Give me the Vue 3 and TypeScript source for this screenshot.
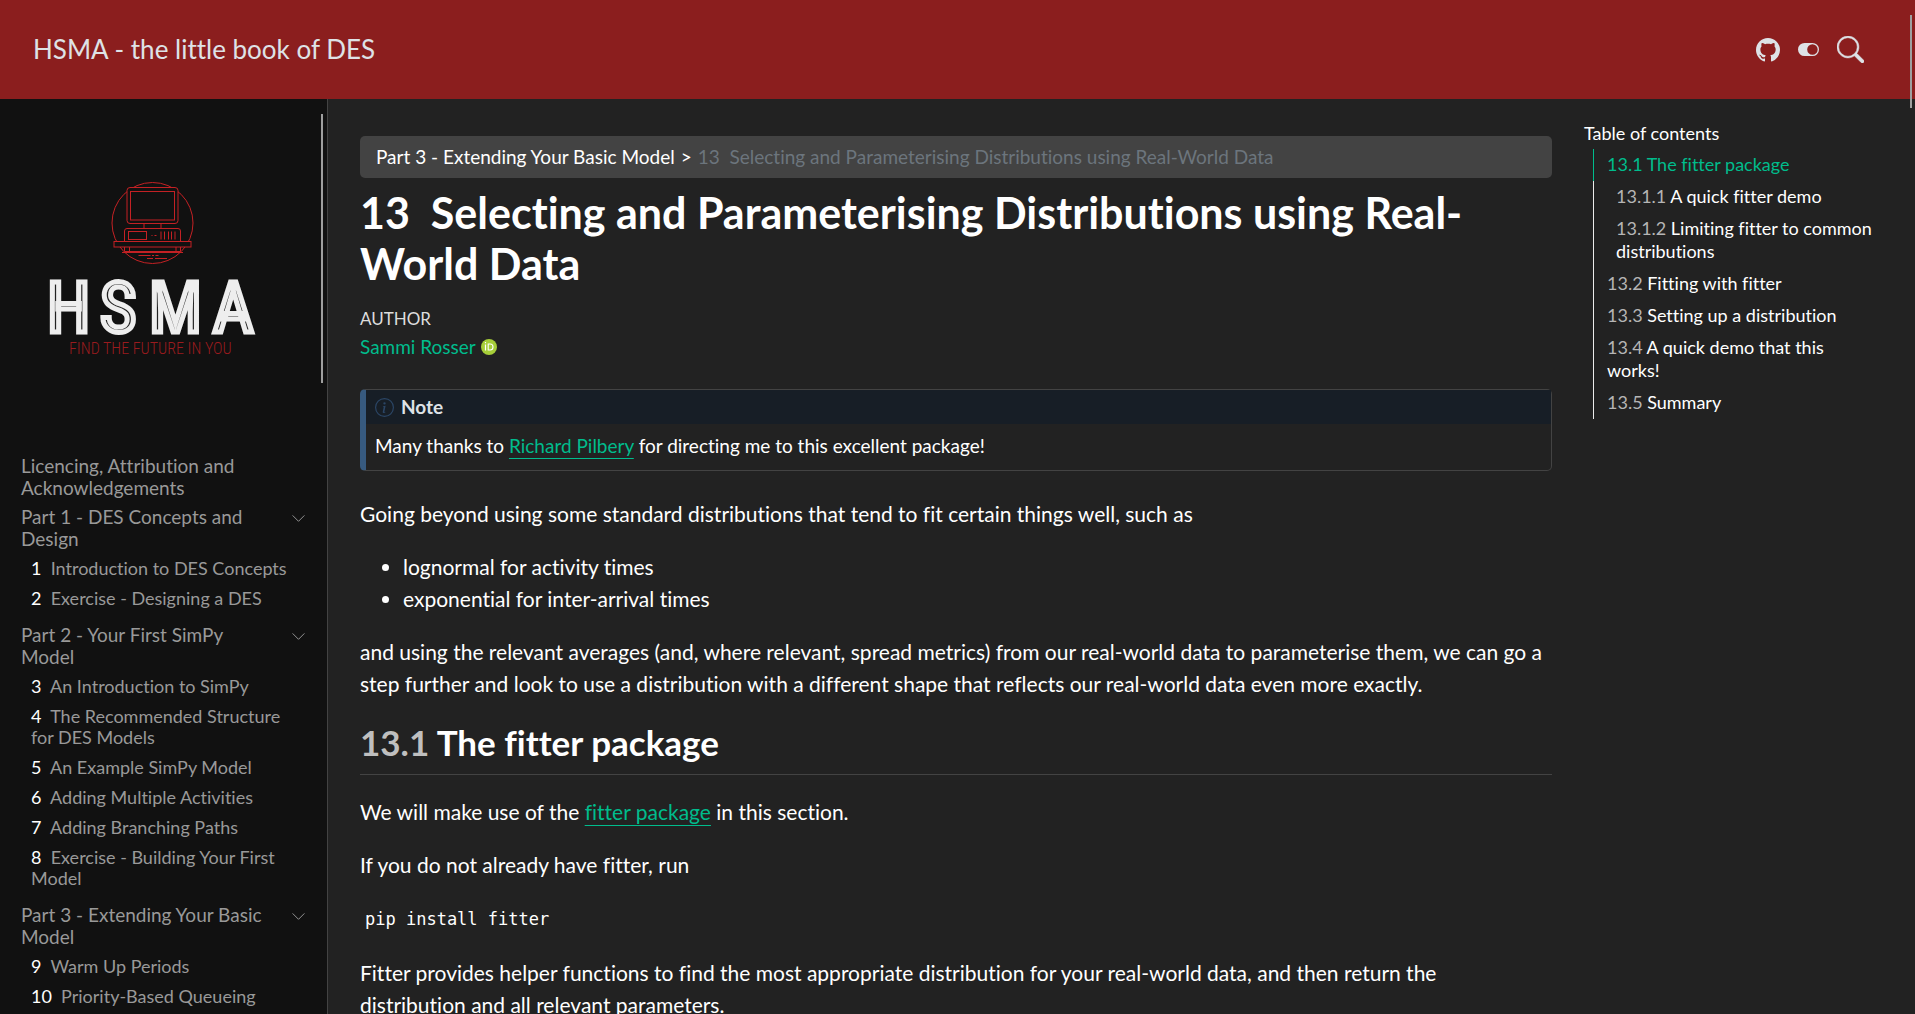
<script setup lang="ts">
interface Chapter {
  num: number
  title: string
}
interface Part {
  title: string
  chapters: Chapter[]
}
interface TocEntry {
  num: string
  title: string
  nested?: boolean
  active?: boolean
}

const parts: Part[] = [
  {
    title: 'Part 1 - DES Concepts and Design',
    chapters: [
      { num: 1, title: 'Introduction to DES Concepts' },
      { num: 2, title: 'Exercise - Designing a DES' },
    ],
  },
  {
    title: 'Part 2 - Your First SimPy Model',
    chapters: [
      { num: 3, title: 'An Introduction to SimPy' },
      { num: 4, title: 'The Recommended Structure for DES Models' },
      { num: 5, title: 'An Example SimPy Model' },
      { num: 6, title: 'Adding Multiple Activities' },
      { num: 7, title: 'Adding Branching Paths' },
      { num: 8, title: 'Exercise - Building Your First Model' },
    ],
  },
  {
    title: 'Part 3 - Extending Your Basic Model',
    chapters: [
      { num: 9, title: 'Warm Up Periods' },
      { num: 10, title: 'Priority-Based Queueing' },
    ],
  },
]

const toc: TocEntry[] = [
  { num: '13.1', title: 'The fitter package', active: true },
  { num: '13.1.1', title: 'A quick fitter demo', nested: true },
  { num: '13.1.2', title: 'Limiting fitter to common distributions', nested: true },
  { num: '13.2', title: 'Fitting with fitter' },
  { num: '13.3', title: 'Setting up a distribution' },
  { num: '13.4', title: 'A quick demo that this works!' },
  { num: '13.5', title: 'Summary' },
]
</script>

<template>
  <div class="page">
    <header class="navbar">
      <a class="brand" href="#">HSMA - the little book of DES</a>
      <div class="tools">
        <a href="#" class="tool" aria-label="GitHub">
          <svg width="24" height="24" viewBox="0 0 16 16" fill="currentColor">
            <path d="M8 0C3.58 0 0 3.58 0 8c0 3.54 2.29 6.53 5.47 7.59.4.07.55-.17.55-.38 0-.19-.01-.82-.01-1.49-2.01.37-2.53-.49-2.69-.94-.09-.23-.48-.94-.82-1.13-.28-.15-.68-.52-.01-.53.63-.01 1.08.58 1.23.82.72 1.21 1.87.87 2.33.66.07-.52.28-.87.51-1.07-1.78-.2-3.64-.89-3.64-3.95 0-.87.31-1.59.82-2.15-.08-.2-.36-1.02.08-2.12 0 0 .67-.21 2.2.82.64-.18 1.32-.27 2-.27s1.36.09 2 .27c1.53-1.04 2.2-.82 2.2-.82.44 1.1.16 1.92.08 2.12.51.56.82 1.27.82 2.15 0 3.07-1.87 3.75-3.65 3.95.29.25.54.73.54 1.48 0 1.07-.01 1.93-.01 2.2 0 .21.15.46.55.38A8.01 8.01 0 0 0 16 8c0-4.42-3.58-8-8-8" />
          </svg>
        </a>
        <button type="button" class="tool" aria-label="Toggle dark mode">
          <svg width="21" height="21" viewBox="0 0 16 16" fill="currentColor">
            <path d="M5 3a5 5 0 0 0 0 10h6a5 5 0 0 0 0-10zm6 9a4 4 0 1 1 0-8 4 4 0 0 1 0 8" />
          </svg>
        </button>
        <button type="button" class="tool" aria-label="Search">
          <svg width="27" height="27" viewBox="0 0 16 16" fill="currentColor" stroke="currentColor" stroke-width="0.3">
            <path d="M11.742 10.344a6.5 6.5 0 1 0-1.397 1.398h-.001c.03.04.062.078.098.115l3.85 3.85a1 1 0 0 0 1.415-1.414l-3.85-3.85a1.007 1.007 0 0 0-.115-.1zM12 6.5a5.5 5.5 0 1 1-11 0 5.5 5.5 0 0 1 11 0" />
          </svg>
        </button>
      </div>
    </header>

    <div class="columns">
      <nav class="sidebar" aria-label="Chapters">
        <a class="logo" href="#" aria-label="HSMA - find the future in you">
          <svg width="264" height="264" viewBox="0 0 264 264">
            <g fill="none" stroke="#c42124" stroke-width="1" transform="translate(0 -2)">
              <circle cx="131.500" cy="88" r="40.500" />
              <rect x="106" y="52.500" width="51" height="36" rx="3" fill="#111" />
              <rect x="109.500" y="56.500" width="44" height="28.500" />
              <path d="M123 88.500v5M140 88.500v5" />
              <path d="M103.500 106.500V96q0-2.500 2.500-2.500h51q2.500 0 2.500 2.500v10.500z" fill="#111" />
              <rect x="107.500" y="96.500" width="18" height="8" />
              <path d="M130.500 100.500h1M133.500 100.500h2M140 96.500v8M143.500 96.500v8M147.500 96.500v8M150.500 96.500v8M154 96.500v8" />
              <rect x="93" y="106.500" width="77" height="5.500" fill="#111" />
              <path d="M103.500 112v4.500h56V112M108.500 112v4.500M155 112v4.500M101 117.500h61" />
              <path d="M117.500 120.500h12M131 120.500h2M134.500 120.500h3M126 123.500h6M134 123.500h12" />
            </g>
            <text class="wordmark" y="195">
              <tspan x="26">H</tspan><tspan x="79">S</tspan><tspan x="128">M</tspan><tspan x="192">A</tspan>
            </text>
            <text class="tagline" x="48" y="217">FIND THE FUTURE IN YOU</text>
          </svg>
        </a>

        <ul class="menu">
          <li><a class="part-link" href="#">Licencing, Attribution and Acknowledgements</a></li>
          <li v-for="part in parts" :key="part.title" class="part">
            <div class="part-head">
              <a class="part-link" href="#">{{ part.title }}</a>
              <button type="button" class="toggle" aria-label="Toggle section">
                <svg width="15" height="15" viewBox="0 0 16 16" fill="none" stroke="currentColor" stroke-linecap="round" stroke-linejoin="round">
                  <path d="M2 5l6 6 6-6" />
                </svg>
              </button>
            </div>
            <ul class="chapters">
              <li v-for="chapter in part.chapters" :key="chapter.num">
                <a class="chapter" href="#"><span class="num">{{ chapter.num }}</span>&nbsp; {{ chapter.title }}</a>
              </li>
            </ul>
          </li>
        </ul>
        <div class="side-thumb"></div>
      </nav>

      <main class="content">
        <nav class="breadcrumb" aria-label="Breadcrumb">
          <a href="#">Part 3 - Extending Your Basic Model</a>
          <span class="sep">&gt;</span>
          <a class="current" href="#">13&nbsp; Selecting and Parameterising Distributions using Real-World Data</a>
        </nav>

        <h1>13&nbsp; Selecting and Parameterising Distributions using Real-World Data</h1>

        <div class="author">
          <div class="author-label">AUTHOR</div>
          <div class="author-name">
            <a href="#">Sammi Rosser</a>
            <a class="orcid" href="#" aria-label="ORCID">
              <svg width="16" height="16" viewBox="0 0 16 16">
                <circle cx="8" cy="8" r="8" fill="#a6ce39" />
                <g fill="none" stroke="#fff">
                  <path d="M4.500 5.500v6M4.500 3v1.200" stroke-width="1.200" />
                  <path d="M7.200 5h2q2.800 0 2.800 3t-2.800 3h-2z" stroke-width="1.100" />
                </g>
              </svg>
            </a>
          </div>
        </div>

        <aside class="note">
          <div class="note-head">
            <svg width="19" height="19" viewBox="0 0 16 16" fill="currentColor">
              <path d="M8 15A7 7 0 1 1 8 1a7 7 0 0 1 0 14m0 1A8 8 0 1 0 8 0a8 8 0 0 0 0 16" />
              <path d="m8.930 6.588-2.290.287-.082.380.450.083c.294.070.352.176.288.469l-.738 3.468c-.194.897.105 1.319.808 1.319.545 0 1.178-.252 1.465-.598l.088-.416c-.2.176-.492.246-.686.246-.275 0-.375-.193-.304-.533zM9 4.500a1 1 0 1 1-2 0 1 1 0 0 1 2 0" />
            </svg>
            <span>Note</span>
          </div>
          <p class="note-body">Many thanks to <a href="#">Richard Pilbery</a> for directing me to this excellent package!</p>
        </aside>

        <p>Going beyond using some standard distributions that tend to fit certain things well, such as</p>
        <ul class="bullets">
          <li>lognormal for activity times</li>
          <li>exponential for inter-arrival times</li>
        </ul>
        <p>and using the relevant averages (and, where relevant, spread metrics) from our real-world data to parameterise them, we can go a step further and look to use a distribution with a different shape that reflects our real-world data even more exactly.</p>

        <h2><span class="section-num">13.1</span> The fitter package</h2>
        <p>We will make use of the <a href="#">fitter package</a> in this section.</p>
        <p>If you do not already have fitter, run</p>
        <pre><code>pip install fitter</code></pre>
        <p>Fitter provides helper functions to find the most appropriate distribution for your real-world data, and then return the distribution and all relevant parameters.</p>
      </main>

      <nav class="toc" aria-labelledby="toc-title">
        <h2 id="toc-title">Table of contents</h2>
        <ul>
          <li v-for="entry in toc" :key="entry.num">
            <a href="#" :class="{ nested: entry.nested, active: entry.active }"><span class="toc-num">{{ entry.num }}</span> {{ entry.title }}</a>
          </li>
        </ul>
      </nav>
    </div>
    <div class="page-thumb"></div>
  </div>
</template>

<style>
body {
  margin: 0;
  background: #222;
}
</style>

<style scoped>
.page {
  position: relative;
  display: flex;
  flex-direction: column;
  height: 100vh;
  overflow: hidden;
  background: #222;
  color: #fff;
  font-family: Lato, "Liberation Sans", sans-serif;
  font-size: 21px;
  font-variant-ligatures: none;
  line-height: 32px;
}

a {
  color: inherit;
  text-decoration: none;
}

button {
  padding: 0;
  border: 0;
  background: none;
  color: inherit;
  font: inherit;
  cursor: pointer;
}

ul {
  margin: 0;
  padding: 0;
  list-style: none;
}

svg {
  display: block;
}

.navbar {
  display: flex;
  flex: none;
  align-items: center;
  justify-content: space-between;
  height: 99px;
  padding: 0 51px 0 33px;
  background: #8b1e1e;
  color: #dee2e6;
}

.brand {
  padding-bottom: 2px;
  font-size: 26px;
}

.tools {
  display: flex;
  align-items: center;
  gap: 18px;
}

.columns {
  display: flex;
  flex: 1;
  min-height: 0;
}

.sidebar {
  position: relative;
  box-sizing: border-box;
  flex: none;
  width: 328px;
  padding: 38px 21px 0;
  overflow: hidden;
  border-right: 1px solid #434343;
  background: #111;
  color: #999;
  font-size: 19px;
  line-height: 22px;
}

.logo {
  display: block;
  width: 264px;
}

/* The wide outline leaves only a thin dark core inside each letter. */
.wordmark {
  fill: #222;
  stroke: #eee;
  stroke-width: 5px;
  font-family: "Liberation Sans Narrow", "Roboto Condensed", "Roboto", sans-serif;
  font-size: 70px;
}

.tagline {
  fill: #9a1b1e;
  font-family: "Liberation Sans Narrow", "Roboto Condensed", "Roboto", sans-serif;
  font-size: 16px;
  font-weight: 300;
}

.menu {
  padding-top: 54px;
}

.part {
  padding-top: 7px;
  padding-bottom: 8px;
}

.part-head {
  display: flex;
  align-items: flex-start;
  justify-content: space-between;
}

.part-link {
  display: block;
  width: 252px;
}

.toggle {
  padding-top: 5px;
}

.chapters {
  margin-top: -1px;
  padding-left: 10px;
  font-size: 18px;
  line-height: 21px;
}

.chapter {
  display: block;
  padding-top: 9px;
}

.num {
  color: #fff;
}

.side-thumb {
  position: absolute;
  top: 15px;
  right: 4px;
  width: 2px;
  height: 269px;
  background: #9f9f9f;
}

.page-thumb {
  position: absolute;
  top: 15px;
  right: 3px;
  width: 2px;
  height: 93px;
  background: #9f9f9f;
}

.content {
  flex: 1;
  min-width: 0;
  padding: 37px 32px 0;
}

.content > p,
.content > h1 {
  padding-right: 6px;
}

.breadcrumb {
  display: flex;
  gap: 6px;
  padding: 5px 16px;
  border-radius: 5px;
  background: #434343;
  font-size: 19px;
}

.breadcrumb .current {
  color: #6c757d;
}

h1 {
  margin: 9px 0 0;
  font-size: 43px;
  font-weight: 700;
  line-height: 51px;
}

.author {
  padding-top: 16px;
  font-size: 19px;
  line-height: 28px;
}

.author-label {
  color: #ddd;
  font-size: 17px;
}

.author-name {
  display: flex;
  align-items: center;
  gap: 5px;
  color: #00bc8c;
}

.note {
  margin: 28px 0 27px;
  border: 1px solid #434343;
  border-left: 6px solid #375a7f;
  border-radius: 5px;
  font-size: 19px;
}

.note-head {
  display: flex;
  align-items: center;
  gap: 7px;
  height: 34px;
  padding: 0 9px;
  background: #171e26;
  color: #dee2e6;
  font-weight: 700;
}

.note-head svg {
  color: #2b4666;
}

.content p {
  margin: 0 0 21px;
}

.content .note-body {
  margin: 0;
  padding: 6px 9px 8px;
}

.content p a {
  color: #00bc8c;
  text-decoration: underline;
  text-underline-offset: 5px;
  text-decoration-thickness: 1px;
}

.bullets {
  margin-bottom: 21px;
  padding-left: 43px;
  list-style: disc;
}

.content h2 {
  margin: 0 0 21px;
  padding: 0 0 11px;
  border-bottom: 1px solid #434343;
  font-size: 35px;
  font-weight: 700;
  line-height: 42px;
}

.section-num {
  color: #bfbfbf;
}

pre {
  margin: 22px 0;
  padding-left: 5px;
  font-family: "DejaVu Sans Mono", monospace;
  font-size: 17px;
}

code {
  font-family: inherit;
}

.toc {
  box-sizing: border-box;
  flex: none;
  width: 331px;
  padding: 23px 0 0;
  font-size: 18px;
  line-height: 23px;
}

.toc h2 {
  margin: 0 0 4px;
  font-size: 18px;
  font-weight: 400;
}

.toc ul {
  margin-left: 9px;
  width: 300px;
}

.toc a {
  display: block;
  padding: 4px 14px 5px 13px;
  border-left: 1px solid #ebebeb;
}

.toc .nested {
  padding-left: 22px;
}

.toc .active,
.toc .active .toc-num {
  border-color: #00bc8c;
  color: #00bc8c;
}

.toc-num {
  color: #b5b5b5;
}
</style>
